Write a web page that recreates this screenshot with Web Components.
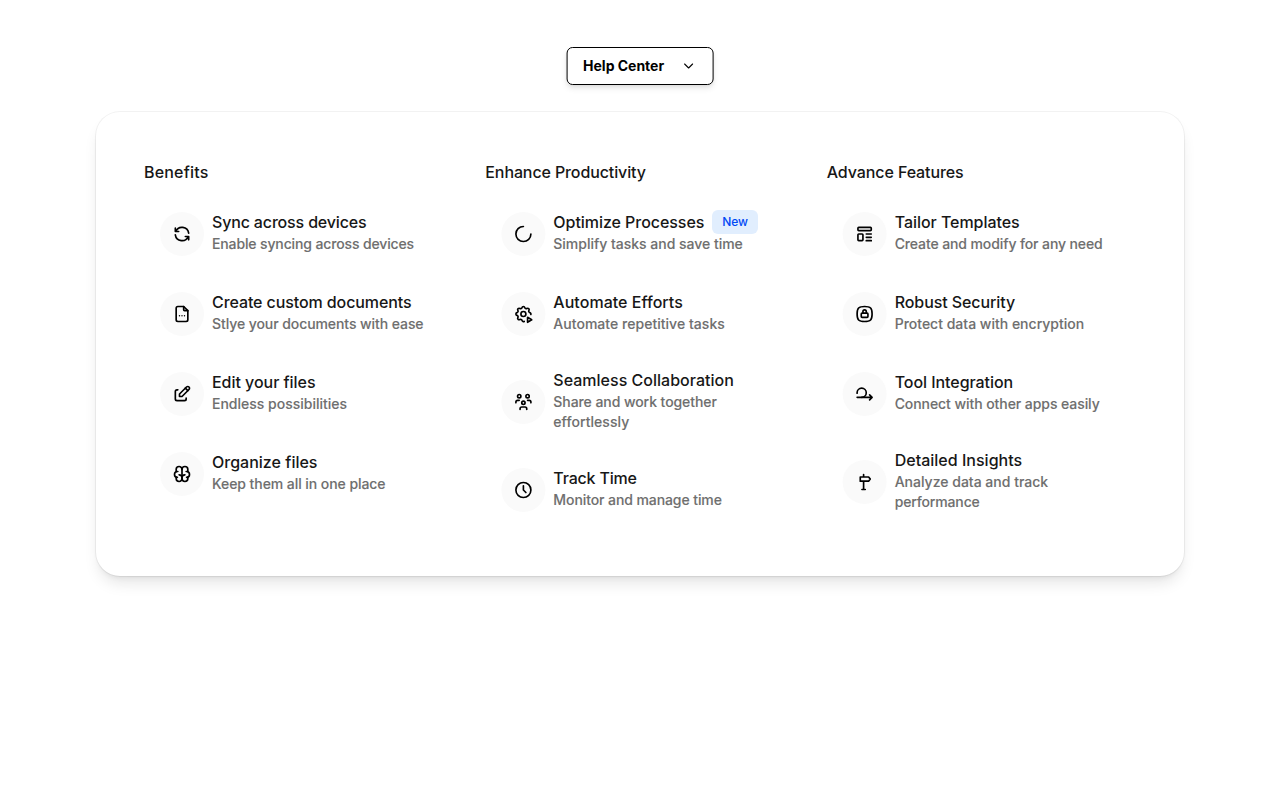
<!DOCTYPE html>
<html lang="en">
<head>
<meta charset="utf-8">
<title>Help Center</title>
<style>
html{min-height:100%}
body{margin:0;min-height:800px;background:#fff;color:#171717;font-family:Inter,"Liberation Sans",sans-serif;font-weight:500}
</style>
</head>
<body>
<help-page></help-page>
<script>
const ICONS = {
  chevron:'<path d="M6 9l6 6l6-6"/>',
  refresh:'<path d="M20 11a8.1 8.1 0 0 0-15.5-2M4 5v4h4"/><path d="M4 13a8.1 8.1 0 0 0 15.5 2M20 19v-4h-4"/>',
  file:'<path d="M14 3v4a1 1 0 0 0 1 1h4"/><path d="M17 21H7a2 2 0 0 1-2-2V5a2 2 0 0 1 2-2h7l5 5v11a2 2 0 0 1-2 2z"/><path d="M9 14v.01M12 14v.01M15 14v.01" stroke-width="1.7"/>',
  edit:'<path d="M7 7H6a2 2 0 0 0-2 2v9a2 2 0 0 0 2 2h9a2 2 0 0 0 2-2v-1"/><path d="M20.385 6.585a2.1 2.1 0 0 0-2.97-2.97L9 12v3h3l8.385-8.415z"/><path d="M16 5l3 3"/>',
  brain:'<path d="M15.5 13a3.5 3.5 0 0 0-3.5 3.5v1a3.5 3.5 0 0 0 7 0v-1.8"/><path d="M8.5 13a3.5 3.5 0 0 1 3.5 3.5v1a3.5 3.5 0 0 1-7 0v-1.8"/><path d="M17.5 16a3.5 3.5 0 0 0 0-7H17"/><path d="M19 9.3V6.5a3.5 3.5 0 0 0-7 0"/><path d="M6.5 16a3.5 3.5 0 0 1 0-7H7"/><path d="M5 9.3V6.5a3.5 3.5 0 0 1 7 0v10"/>',
  loader:'<path d="M12 3a9 9 0 1 0 9 9"/>',
  automation:'<path d="M13 20.95c-.9.45-2.34.03-2.675-1.267a1.724 1.724 0 0 0-2.573-1.066c-1.543.94-3.31-.826-2.37-2.37a1.724 1.724 0 0 0-1.065-2.572c-1.756-.426-1.756-2.924 0-3.35a1.724 1.724 0 0 0 1.066-2.573c-.94-1.543.826-3.31 2.37-2.37 1 .608 2.296.07 2.572-1.065.426-1.756 2.924-1.756 3.35 0a1.724 1.724 0 0 0 2.573 1.066c1.543-.94 3.31.826 2.37 2.37a1.724 1.724 0 0 0 1.065 2.572c1.1.27 1.57 1.35 1.25 2.25"/><path d="M15 12a3 3 0 1 0-6 0a3 3 0 0 0 6 0M17 22l5-3l-5-3z"/>',
  users:'<path d="M10 13a2 2 0 1 0 4 0a2 2 0 0 0-4 0"/><path d="M8 21v-1a2 2 0 0 1 2-2h4a2 2 0 0 1 2 2v1"/><path d="M15 5a2 2 0 1 0 4 0a2 2 0 0 0-4 0"/><path d="M17 10h2a2 2 0 0 1 2 2v1"/><path d="M5 5a2 2 0 1 0 4 0a2 2 0 0 0-4 0"/><path d="M3 13v-1a2 2 0 0 1 2-2h2"/>',
  clock:'<path d="M3 12a9 9 0 1 0 18 0a9 9 0 0 0-18 0"/><path d="M12 7v5l3 3"/>',
  template:'<rect x="4" y="4" width="16" height="4" rx="1"/><rect x="4" y="12" width="6" height="8" rx="1"/><path d="M14 12h6M14 16h6M14 20h6"/>',
  lock:'<path d="M12 3c7.2 0 9 1.8 9 9s-1.8 9-9 9-9-1.8-9-9 1.8-9 9-9z"/><rect x="8" y="11" width="8" height="5" rx="1"/><path d="M10 11V9a2 2 0 1 1 4 0v2"/>',
  loop:'<path d="M8.5 16a5.5 5.5 0 1 0-5.5-5.5v.5"/><path d="M3 16h18M18 13l3 3l-3 3"/>',
  sign:'<path d="M8 21h4M10 21V11M10 6V3M6 6h10l2 2.5l-2 2.5H6z"/>'
};
ICONS.sign = `<g transform="translate(.8 0)">${ICONS.sign}</g>`;

class UiIcon extends HTMLElement {
  connectedCallback() {
    this.attachShadow({mode:'open'}).innerHTML = `<style>:host{display:block;flex:none;width:20px;height:20px;color:#000}svg{display:block;width:100%;height:100%}</style>
    <svg viewBox="0 0 24 24" fill="none" stroke="currentColor" stroke-width="${this.getAttribute('stroke') || 2}" stroke-linecap="round" stroke-linejoin="round">${ICONS[this.getAttribute('name')]}</svg>`;
  }
}
customElements.define('ui-icon', UiIcon);

/* One line of text whose tracking is adjusted to a given width. */
class TrackedText extends HTMLElement {
  connectedCallback() {
    this.attachShadow({mode:'open'}).innerHTML = `<style>:host{display:block;width:max-content;white-space:nowrap}span{display:inline-block}</style><span><slot></slot></span>`;
    const span = this.shadowRoot.querySelector('span');
    const want = +this.getAttribute('w');
    if (want) span.style.letterSpacing = (want - span.getBoundingClientRect().width) / this.textContent.length + 'px';
  }
}
customElements.define('tracked-text', TrackedText);

class MenuButton extends HTMLElement {
  constructor() {
    super();
    this.attachShadow({mode:'open'}).innerHTML = `<style>
    :host{display:block;transform:translateX(-.4px)}
    button{display:flex;align-items:center;justify-content:space-between;box-sizing:border-box;width:147px;height:38px;padding:0 16px;border:1px solid #000;border-radius:6px;background:#fff;color:#000;font:700 14px/20px Inter,"Liberation Sans",sans-serif;box-shadow:0 4px 6px -1px rgba(0,0,0,.1),0 2px 4px -2px rgba(0,0,0,.1)}
    tracked-text{margin-left:.4px}
    ui-icon{width:16px;height:16px}
    </style><button><slot></slot><ui-icon name="chevron" stroke="1.6"></ui-icon></button>`;
  }
}
customElements.define('menu-button', MenuButton);

class NewBadge extends HTMLElement {
  constructor() {
    super();
    this.attachShadow({mode:'open'}).innerHTML = `<style>:host{display:flex;align-items:center;justify-content:center;box-sizing:border-box;width:45.5px;height:24px;border-radius:6px;background:#e1eefe;color:#0049f5;font-size:12px;line-height:16px}</style><slot></slot>`;
  }
}
customElements.define('new-badge', NewBadge);

class MenuItem extends HTMLElement {
  connectedCallback() {
    this.attachShadow({mode:'open'}).innerHTML = `<style>
    :host{display:flex;align-items:center;gap:8px;padding:18px 16px}
    .disc{display:grid;place-items:center;flex:none;width:44px;height:44px;border-radius:50%;background:#fafafa;transform:translateX(var(--nudge,0px))}
    .title{display:flex;gap:8px;margin-top:-4px;height:24px;font-size:16px;line-height:24px}
    .desc{color:#6f6f6f;font-size:14px;line-height:20px;-webkit-text-stroke:.1px currentColor}
    </style><div class="disc"><ui-icon name="${this.getAttribute('icon')}"></ui-icon></div>
    <div><div class="title"><slot name="title"></slot><slot name="badge"></slot></div><div class="desc"><slot></slot></div></div>`;
  }
}
customElements.define('menu-item', MenuItem);

class MenuColumn extends HTMLElement {
  constructor() {
    super();
    this.attachShadow({mode:'open'}).innerHTML = `<style>:host{display:block;min-width:0}.head{font-size:16px;line-height:24px;margin-bottom:10px}</style><div class="head"><slot name="heading"></slot></div><slot></slot>`;
  }
}
customElements.define('menu-column', MenuColumn);

const COLUMNS = [
  [['Benefits',64.5],[
    ['refresh',['Sync across devices',154.5],[['Enable syncing across devices',202]]],
    ['file',['Create custom documents',199.5],[['Stlye your documents with ease',211.5]]],
    ['edit',['Edit your files',103.5],[['Endless possibilities',135]]],
    ['brain',['Organize files',105.5],[['Keep them all in one place',173.5]]]]],
  [['Enhance Productivity',160.5],[
    ['loader',['Optimize Processes',151],[['Simplify tasks and save time',189.5]],'New'],
    ['automation',['Automate Efforts',129.5],[['Automate repetitive tasks',171.5]]],
    ['users',['Seamless Collaboration',180.5],[['Share and work together',163.5],['effortlessly',76]]],
    ['clock',['Track Time',83.5],[['Monitor and manage time',168.5]]]]],
  [['Advance Features',137],[
    ['template',['Tailor Templates',125],[['Create and modify for any need',208]]],
    ['lock',['Robust Security',120.5],[['Protect data with encryption',189.5]]],
    ['loop',['Tool Integration',118.5],[['Connect with other apps easily',205]]],
    ['sign',['Detailed Insights',127.5],[['Analyze data and track',153.5],['performance',85]]]]]
];
const line = ([text, w], attrs = '') => `<tracked-text w="${w}" ${attrs}>${text}</tracked-text>`;

class HelpPage extends HTMLElement {
  constructor() {
    super();
    const columns = COLUMNS.map(([head, items]) => `<menu-column>${line(head, 'slot="heading"')}${items.map(([icon, title, desc, badge]) =>
      `<menu-item icon="${icon}">${line(title, 'slot="title"')}${badge ? `<new-badge slot="badge">${badge}</new-badge>` : ''}${desc.map(d => line(d)).join('')}</menu-item>`).join('')}</menu-column>`).join('');
    this.attachShadow({mode:'open'}).innerHTML = `<style>
    :host{display:flex;flex-direction:column;align-items:center;box-sizing:border-box;height:800px;padding-top:47px}
    main{box-sizing:border-box;width:1088px;margin-top:27px;padding:48px 48px 46px;display:grid;grid-template-columns:repeat(3,minmax(0,1fr));column-gap:32px;border-radius:24px;background:#fff;box-shadow:0 0 0 1px rgba(0,0,0,.05),0 10px 15px -3px rgba(0,0,0,.1),0 4px 6px -4px rgba(0,0,0,.1)}
    menu-column:nth-child(2){--nudge:.4px}
    menu-column:nth-child(3){--nudge:-.4px}
    </style><menu-button>${line(['Help Center',81])}</menu-button><main>${columns}</main>`;
  }
}
customElements.define('help-page', HelpPage);
</script>
</body>
</html>
